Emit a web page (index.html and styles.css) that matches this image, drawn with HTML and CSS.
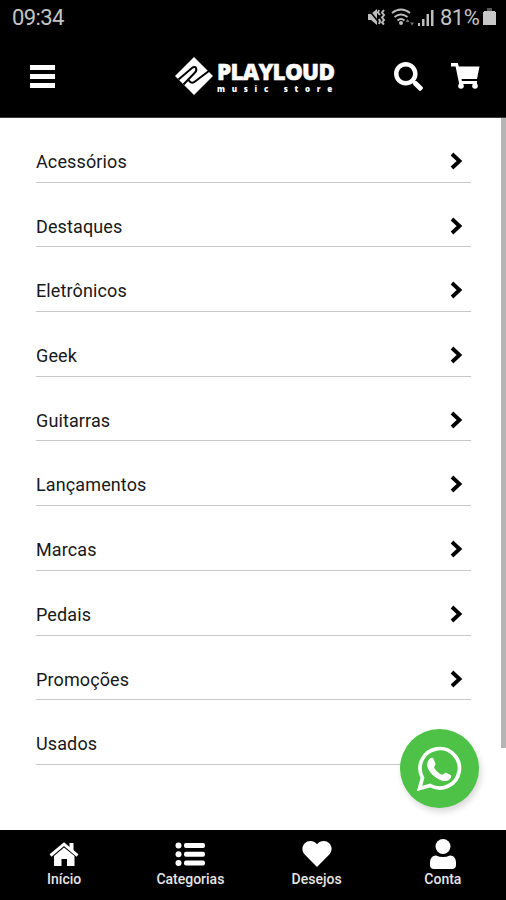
FILE: index.html
```html
<!DOCTYPE html>
<html lang="pt-BR">
<head>
<meta charset="utf-8">
<title>Playloud Music Store</title>
<link rel="stylesheet" href="styles.css">
</head>
<body>
<div class="app">
  <div class="status">
    <span class="clock">09:34</span>
    <div class="status-right">
      <svg class="status-icons" viewBox="0 0 68 20" width="68" height="20">
        <g fill="#bdbdbd">
          <path d="M1 6h3l6-5v16l-6-5H1z"/>
          <path d="M51 15h2v3h-2zM55 11h2.500v7H55zM59.500 6H62v12h-2.500zM64 2h2.500v16H64z"/>
          <circle cx="34" cy="15" r="2"/>
          <path d="M38.500 14l2-3 2 3zM43 14.500l2 3 2-3z" opacity=".6"/>
        </g>
        <path d="M1 1l13 16" stroke="#000" stroke-width="1.500"/>
        <g fill="none" stroke="#bdbdbd" stroke-width="2">
          <path d="M12 2l-1 2.500 2 2.500M17 2l-2 2.500 2 2.500-2 2.500 2 2.500-2 2.500 2 2M12 11l1 2-1 3"/>
          <path d="M25 5q9-7 18 0M27.500 9q6.500-5 13 0M30.500 12.500q3.500-3 7 0"/>
        </g>
      </svg>
      <span class="percent">81%</span>
      <svg class="battery" viewBox="0 0 13 18" width="13" height="18"><path d="M4 0h5v3H4z" fill="#555"/><path d="M1 3h11v1h1v13H0V4h1z" fill="#c8c8c8"/></svg>
    </div>
  </div>
  <header class="header">
    <div class="menu"><i></i><i></i><i></i></div>
    <div class="brand">
      <svg class="mark" viewBox="0 0 38 38" width="38" height="38">
        <path d="M19 0L38 19 19 38 0 19z" fill="#fff"/>
        <path d="M3.500 22.500L17.500 10.500q3-1.500 3.700 1t-1.700 4.500L8.500 27.500M13.500 23q3 4.500 6.500 1.500L34.500 13.500" fill="none" stroke="#000" stroke-width="2"/>
      </svg>
      <div class="wordmark"><span class="name">PLAYLOUD</span><span class="tag">music store</span></div>
    </div>
    <svg class="search" viewBox="0 0 512 512" width="29" height="29"><path fill="#fff" d="M505 442.700L405.300 343c-4.500-4.500-10.600-7-17-7H372c27.600-35.300 44-79.700 44-128C416 93.100 322.900 0 208 0S0 93.100 0 208s93.100 208 208 208c48.300 0 92.700-16.400 128-44v16.300c0 6.400 2.500 12.500 7 17l99.700 99.700c9.400 9.400 24.600 9.400 33.900 0l28.300-28.300c9.400-9.400 9.400-24.600.1-34zM208 336c-70.700 0-128-57.200-128-128 0-70.700 57.200-128 128-128 70.700 0 128 57.200 128 128 0 70.700-57.200 128-128 128z"/></svg>
    <svg class="cart" viewBox="0 0 29 26" width="29" height="26">
      <path d="M0 0h6.800l1 3.500H28.500L26 16H10.500l.4 2H26v3H8.200L4.600 3.500H0z" fill="#fff"/>
      <circle cx="10" cy="23" r="2.800" fill="#fff"/><circle cx="24" cy="23" r="2.800" fill="#fff"/>
    </svg>
  </header>
  <main class="content">
    <ul class="list">
      <li><span>Acessórios</span><svg class="chev" viewBox="0 0 13 18"><path d="M2 2l7.500 7L2 16"/></svg></li>
      <li><span>Destaques</span><svg class="chev" viewBox="0 0 13 18"><path d="M2 2l7.500 7L2 16"/></svg></li>
      <li><span>Eletrônicos</span><svg class="chev" viewBox="0 0 13 18"><path d="M2 2l7.500 7L2 16"/></svg></li>
      <li><span>Geek</span><svg class="chev" viewBox="0 0 13 18"><path d="M2 2l7.500 7L2 16"/></svg></li>
      <li><span>Guitarras</span><svg class="chev" viewBox="0 0 13 18"><path d="M2 2l7.500 7L2 16"/></svg></li>
      <li><span>Lançamentos</span><svg class="chev" viewBox="0 0 13 18"><path d="M2 2l7.500 7L2 16"/></svg></li>
      <li><span>Marcas</span><svg class="chev" viewBox="0 0 13 18"><path d="M2 2l7.500 7L2 16"/></svg></li>
      <li><span>Pedais</span><svg class="chev" viewBox="0 0 13 18"><path d="M2 2l7.500 7L2 16"/></svg></li>
      <li><span>Promoções</span><svg class="chev" viewBox="0 0 13 18"><path d="M2 2l7.500 7L2 16"/></svg></li>
      <li><span>Usados</span></li>
    </ul>
    <div class="scrollbar"></div>
    <div class="whatsapp">
      <svg viewBox="0 0 45 45" width="45" height="45">
        <path d="M2.500 42.500l3-10.700A19.700 19.700 0 1 1 13.200 39.500z" fill="none" stroke="#fff" stroke-width="3.700"/>
        <path d="M12.500 13c1.500-1.700 3.400-1.500 4.200.3l1.700 4.200c.6 1.500-1.600 2.800-1.200 4 1.500 3.200 4.500 6 7.800 7.300 1.200.4 2.700-2.600 4-2l4.300 1.900c1.300.8 1 2.500-.1 4-2 2.500-5.300 2.900-8.700 1.700-6.200-2.300-11.100-6.900-13.400-11.700-1.700-3.600-.8-7.500 1.400-9.700z" fill="#fff"/>
      </svg>
    </div>
  </main>
  <nav class="nav">
    <a><svg viewBox="0 0 30 24" width="30" height="24"><path d="M15 5.500L25.500 14v10H18v-7h-5.500v7H5V14z" fill="#fff"/><path d="M1.500 13.500L15 2.200l13.500 11.300" fill="none" stroke="#fff" stroke-width="3"/><path d="M20.500 1h4v8l-4-3.500z" fill="#fff"/></svg><span>Início</span></a>
    <a><svg viewBox="0 0 30 24" width="30" height="24"><g fill="#fff"><circle cx="3.500" cy="3.500" r="3"/><circle cx="3.500" cy="12.200" r="3"/><circle cx="3.500" cy="21" r="3"/><rect x="9" y="1" width="21" height="5" rx="2"/><rect x="9" y="9.700" width="21" height="5" rx="2"/><rect x="9" y="18.500" width="21" height="5" rx="2"/></g></svg><span>Categorias</span></a>
    <a><svg viewBox="0 0 30 26" width="30" height="26"><path d="M15 26L2.700 13.500C-.3 10.400-.3 5.500 2.500 2.500 6-1 11.500-.8 15 3.200 18.500-.8 24-1 27.500 2.500c2.800 3 2.800 7.900-.2 11z" fill="#fff"/></svg><span>Desejos</span></a>
    <a><svg viewBox="0 0 26 30" width="26" height="30"><circle cx="13" cy="7.500" r="7.500" fill="#fff"/><path d="M6 16.500q7 3 14 0c4 0 6 3.500 6 7V26q0 4-4 4H4q-4 0-4-4v-2.500c0-3.500 2-7 6-7z" fill="#fff"/></svg><span>Conta</span></a>
  </nav>
</div>
</body>
</html>
```
FILE: styles.css
```css
* { box-sizing: border-box; }
body { margin: 0; background: #fff; font-family: Roboto, "Liberation Sans", sans-serif; }
.app { width: 506px; height: 900px; display: flex; flex-direction: column; overflow: hidden; }
.status { height: 36px; background: #000; color: #c4c4c4; display: flex; justify-content: space-between; padding: 0 10px 0 12px; font-size: 22px; line-height: 35px; }
.clock { letter-spacing: -0.6px; }
.status-right { display: flex; }
.status-icons { margin-top: 8px; }
.percent { margin-left: 5px; letter-spacing: -0.5px; width: 43px; }
.battery { margin-top: 8px; }
.header { height: 82px; background: #000; display: flex; align-items: flex-start; padding-left: 30px; border-bottom: 1px solid #3a3a3a; }
.menu { width: 25px; margin-top: 29px; display: flex; flex-direction: column; gap: 4px; }
.menu i { height: 5px; background: #fff; }
.brand { display: flex; margin: 21px 0 0 120px; width: 159px; }
.mark { flex: none; }
.wordmark { margin: 5px 0 0 4px; color: #fff; display: flex; flex-direction: column; white-space: nowrap; }
.name { font: 900 22.5px/20px "Open Sans", sans-serif; letter-spacing: -0.75px; -webkit-text-stroke: 0.5px #fff; }
.tag { margin-top: 2px; font: 800 8px/9px "Open Sans", sans-serif; letter-spacing: 6.7px; }
.search { margin: 26px 0 0 60px; }
.cart { margin: 27px 0 0 28px; }
.content { position: relative; flex: 1; background: #fff; }
.list { list-style: none; margin: 0; padding: 0 35px 0 36px; }
.list li { height: 64.7px; display: flex; align-items: flex-start; justify-content: space-between; padding: 32px 8px 0 0; border-bottom: 1px solid #c8c8c8; font-size: 18px; line-height: 23px; letter-spacing: 0.12px; color: #181818; }
.chev { width: 13px; height: 18px; margin-top: 2px; fill: none; stroke: #000; stroke-width: 3.8; }
.scrollbar { position: absolute; top: 0; right: 0; width: 5px; height: 630px; background: #b5b5b5; }
.whatsapp { position: absolute; left: 400px; top: 611px; width: 79px; height: 79px; border-radius: 50%; background: #4dc247; display: flex; align-items: center; justify-content: center; box-shadow: 2px 4px 6px rgba(0,0,0,.15); }
.nav { height: 70px; background: #000; display: grid; grid-template-columns: repeat(4, 1fr); padding: 9px 0 0 1px; }
.nav a { display: flex; flex-direction: column; align-items: center; color: #e6e6e6; }
.nav svg { height: 30px; }
.nav span { font-size: 14px; line-height: 20px; font-weight: 500; }
```
